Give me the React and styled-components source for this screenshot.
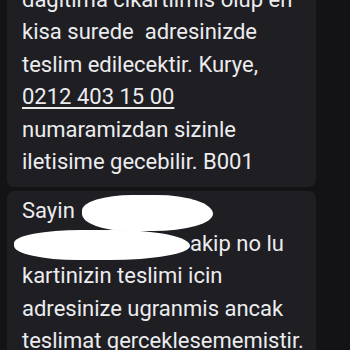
import React from 'react';
import styled, { createGlobalStyle } from 'styled-components';

const Global = createGlobalStyle`
  html, body {
    margin: 0;
    padding: 0;
    background: #141417;
  }
  body {
    width: 350px;
    height: 350px;
    overflow: hidden;
  }
`

const Screen = styled.div`
  width: 350px;
  height: 350px;
  overflow: hidden;
  background: #131316;
  font-family: Roboto, "Noto Sans", "Liberation Sans", sans-serif;
`

const Thread = styled.div`
  display: flex;
  flex-direction: column;
  gap: 4px;
  padding-left: 7px;
  width: 309px;
  margin-top: -20px;
`

const Bubble = styled.div`
  background: #1e1e23;
  color: #ececee;
  font-size: 22px;
  line-height: 32.4px;
  padding: ${({ last }) => (last ? '4px 8px 8px 15px' : '4px 8px 9px 15px')};
  border-radius: 7px;
  white-space: pre;
`

const Phone = styled.span`
  text-decoration: underline;
  text-decoration-thickness: 2px;
  text-underline-offset: 3px;
`

const Redact = styled.span`
  display: inline-block;
  vertical-align: middle;
  background: #ffffff;
  height: ${({ h }) => h}px;
  width: ${({ w }) => w}px;
  margin-left: ${({ ml }) => ml}px;
  margin-top: -8px;
  margin-bottom: -8px;
  border-radius: 40% 45% 48% 38% / 45% 55% 50% 50%;
`

function App() {
  return (
    <Screen>
      <Global />
      <Thread>
        <Bubble>
          {'dagitima cikartilmis olup en\nkisa surede  adresinizde\nteslim edilecektir. Kurye,\n'}
          <Phone>0212 403 15 00</Phone>
          {'\nnumaramizdan sizinle\niletisime gecebilir. B001'}
        </Bubble>
        <Bubble last>
          {'Sayin '}
          <Redact w={131} h={36} ml={2} />
          {'\n'}
          <Redact w={176} h={30} ml={-8} />
          {'akip no lu\nkartinizin teslimi icin\nadresinize ugranmis ancak\nteslimat gerceklesememistir.'}
        </Bubble>
      </Thread>
    </Screen>
  );
}

export default App
